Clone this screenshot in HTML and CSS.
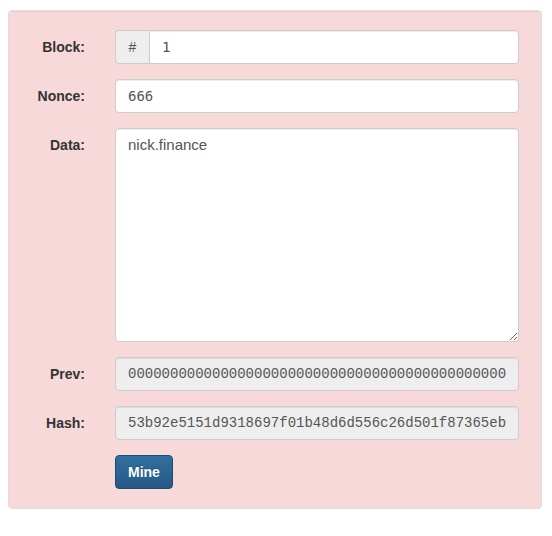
FILE: index.html
```html
<!DOCTYPE html>
<html>
<head>
<meta charset="utf-8">
<link rel="stylesheet" href="styles.css">
</head>
<body>
<div class="well">
  <form class="form">
    <label class="label">Block:</label>
    <div class="group">
      <span class="addon">#</span>
      <input class="control mono grouped" type="text" value="1">
    </div>

    <label class="label">Nonce:</label>
    <input class="control mono" type="text" value="666">

    <label class="label">Data:</label>
    <textarea class="control area" rows="10">nick.finance</textarea>

    <label class="label">Prev:</label>
    <input class="control courier" type="text" value="000000000000000000000000000000000000000000000" readonly>

    <label class="label">Hash:</label>
    <input class="control courier" type="text" value="53b92e5151d9318697f01b48d6d556c26d501f87365eb" readonly>

    <span></span>
    <div><button type="button" class="btn">Mine</button></div>
  </form>
</div>
</body>
</html>
```
FILE: styles.css
```css
* { box-sizing: border-box; }
body {
  margin: 8px;
  font-family: "Liberation Sans", Arial, sans-serif;
  font-size: 14px;
  line-height: 20px;
  color: #333;
  background: #fff;
}
.well {
  margin-top: 2px;
  width: 534px;
  padding: 19px;
  background: #f8d9da;
  border: 1px solid #dedede;
  border-radius: 4px;
  box-shadow: inset 0 1px 1px rgba(0,0,0,.05);
}
.form {
  display: grid;
  grid-template-columns: 57px 404px;
  column-gap: 30px;
  row-gap: 15px;
}
.label {
  text-align: right;
  font-weight: bold;
  padding-top: 7px;
  color: #333;
}
.control {
  display: block;
  width: 100%;
  height: 34px;
  padding: 6px 12px;
  font-size: 14px;
  line-height: 20px;
  color: #555;
  background: #fff;
  border: 1px solid #ccc;
  border-radius: 4px;
  box-shadow: inset 0 1px 1px rgba(0,0,0,.075);
  font-family: "Liberation Sans", Arial, sans-serif;
  margin: 0;
}
.mono { font-family: "DejaVu Sans Mono", monospace; font-size: 14px; }
.courier { font-family: "Liberation Mono", monospace; background: #eee; }
.area {
  height: 214px;
  resize: vertical;
  font-size: 15px;
}
.group { display: flex; }
.addon {
  width: 34px;
  height: 34px;
  flex: none;
  display: flex;
  align-items: center;
  justify-content: center;
  background: #eee;
  border: 1px solid #ccc;
  border-right: 0;
  border-radius: 4px 0 0 4px;
  color: #555;
  font-size: 14px;
}
.grouped { border-radius: 0 4px 4px 0; }
.btn {
  height: 34px;
  padding: 6px 12px;
  font-family: "Liberation Sans", Arial, sans-serif;
  font-size: 14px;
  font-weight: bold;
  line-height: 20px;
  color: #fff;
  background: linear-gradient(#30709f, #255986);
  border: 1px solid #1e4a72;
  border-radius: 4px;
  text-shadow: 0 -1px 0 rgba(0,0,0,.2);
  cursor: pointer;
}
```
